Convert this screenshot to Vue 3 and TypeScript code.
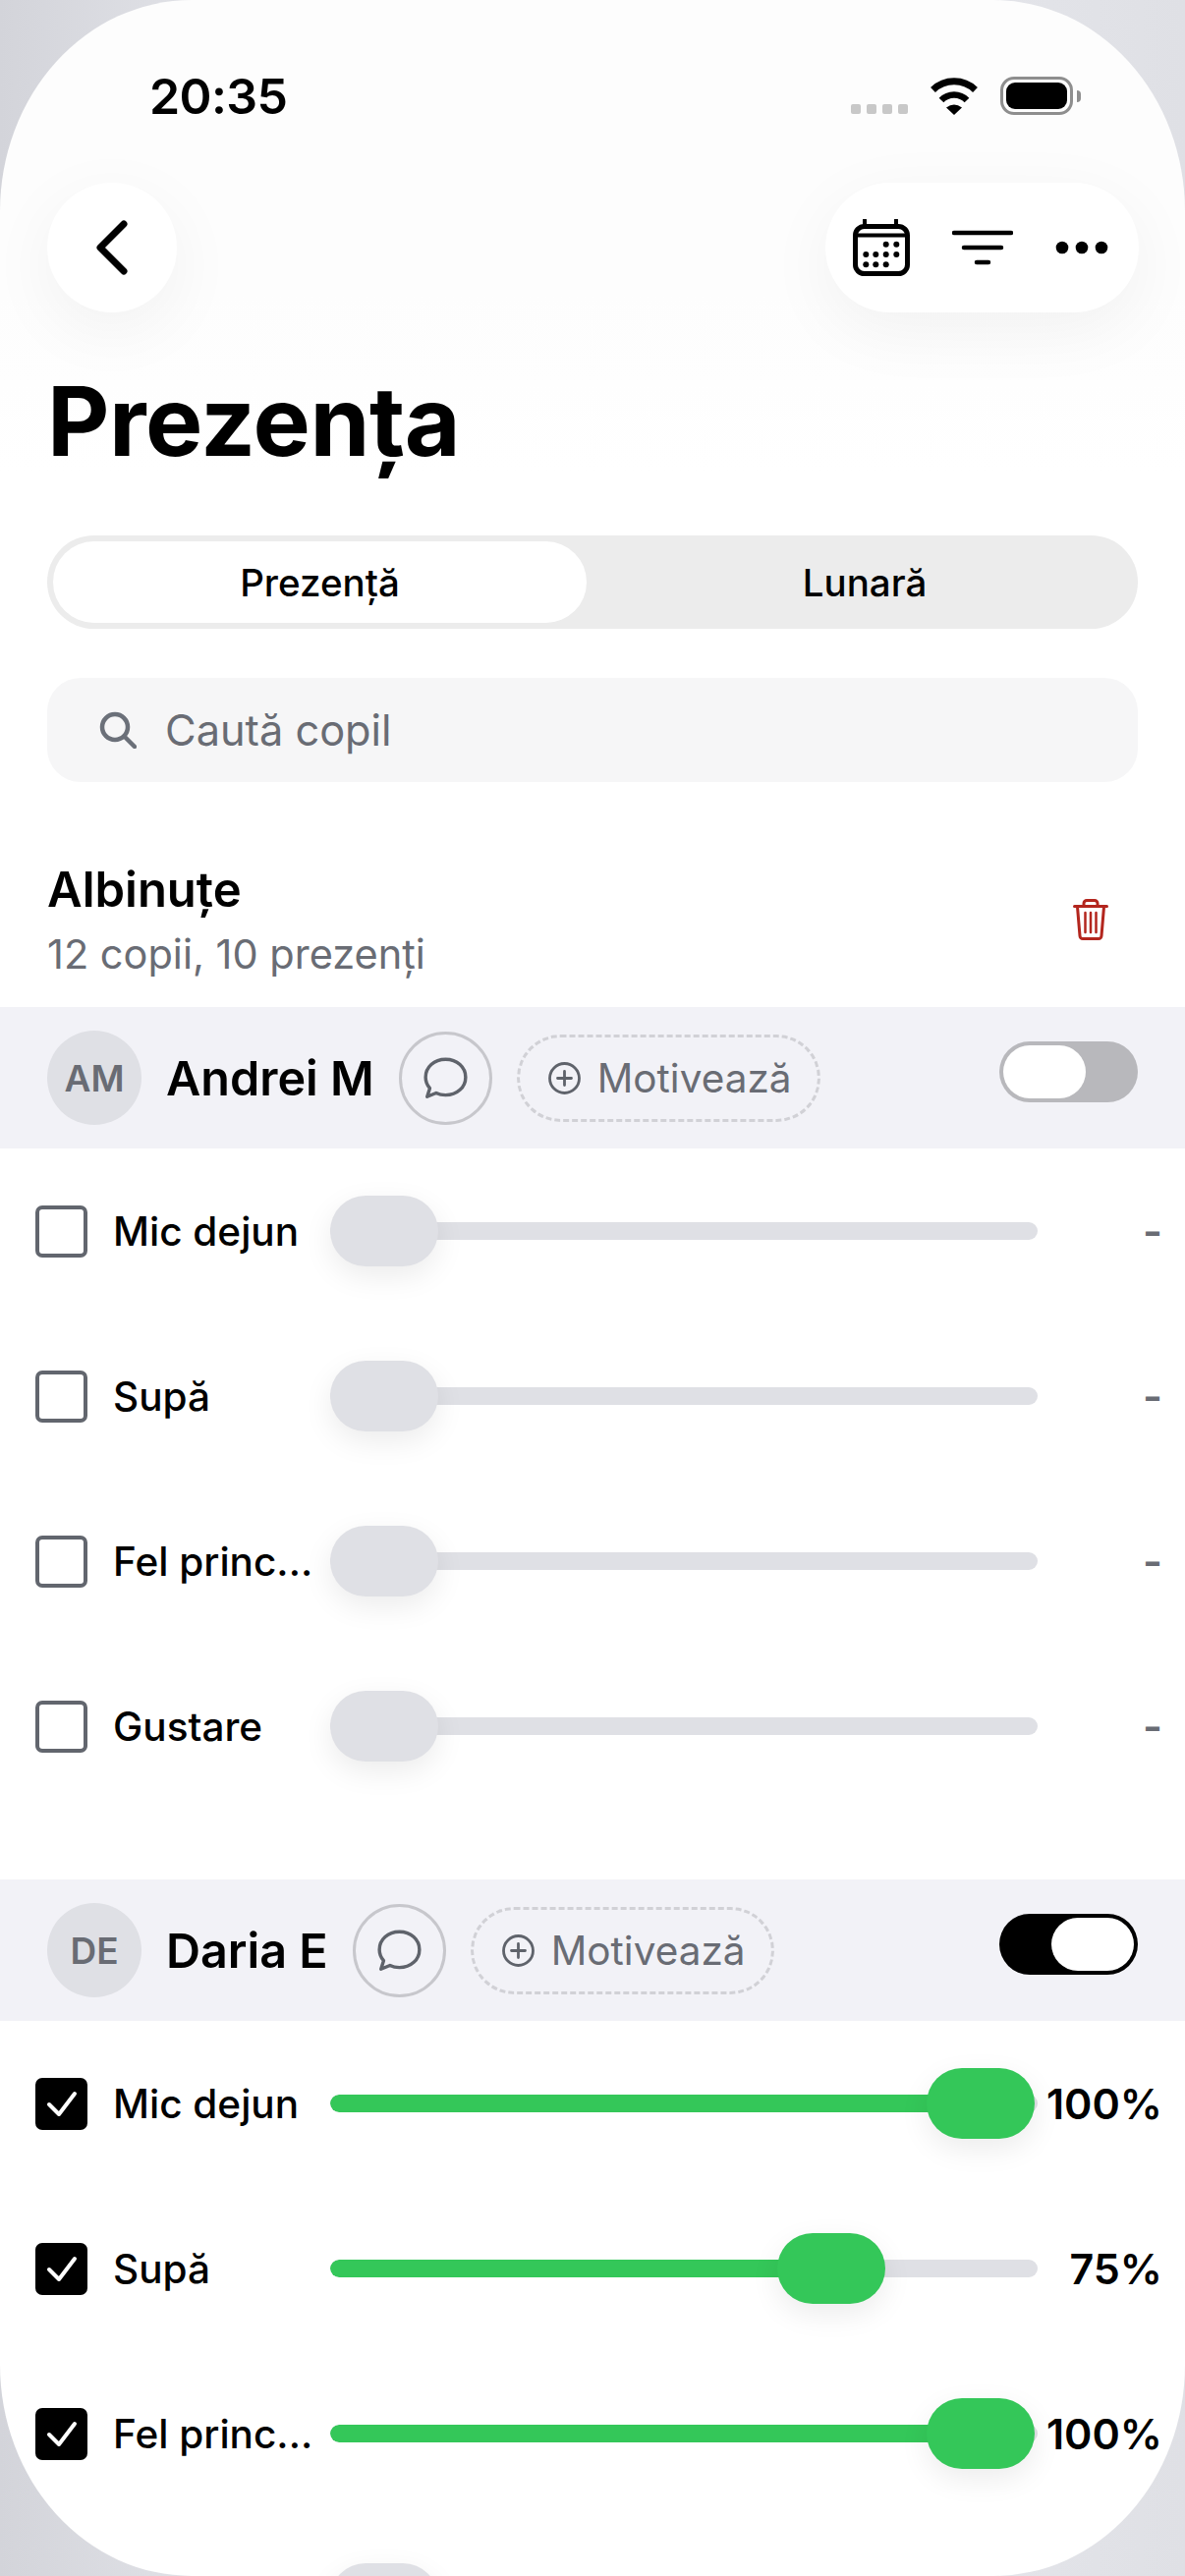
<template>
  <div class="screen">
    <div class="status-bar">
      <span class="time">20:35</span>
      <div class="status-icons">
        <div class="signal">
          <i v-for="n in 4" :key="n"></i>
        </div>
        <svg class="wifi" width="50" height="38" viewBox="0 0 50 38">
          <path d="M3.500 12.500A31 31 0 0 1 46.500 12.500" fill="none" stroke="#000" stroke-width="7" />
          <path d="M12 23A18 18 0 0 1 38 23" fill="none" stroke="#000" stroke-width="6.500" />
          <path d="M25 38L17 30.500Q25 24.500 33 30.500Z" fill="#000" />
        </svg>
        <div class="battery">
          <div class="battery-body"><div class="battery-level"></div></div>
          <div class="battery-nub"></div>
        </div>
      </div>
    </div>

    <div class="nav">
      <button class="round-btn back-btn">
        <svg width="34" height="56" viewBox="0 0 34 56" fill="none">
          <path d="M29 4L5 28L29 52" stroke="#000" stroke-width="7" stroke-linecap="round" stroke-linejoin="round" />
        </svg>
      </button>
      <div class="round-btn actions">
        <svg width="58" height="58" viewBox="0 0 58 58" fill="none" stroke="#000">
          <rect x="2.500" y="7.500" width="53" height="48" rx="9" stroke-width="5" />
          <path d="M12 1V7M44 1V7" stroke-width="4" stroke-linecap="round" />
          <path d="M3 16.500H55" stroke-width="4" />
          <g fill="#000" stroke="none">
            <circle v-for="d in calendarDots" :key="d[0] + '-' + d[1]" :cx="d[0]" :cy="d[1]" r="3" />
          </g>
        </svg>
        <svg width="62" height="36" viewBox="0 0 62 36" fill="none" stroke="#000" stroke-width="4.500" stroke-linecap="round">
          <path d="M2 3H60M12 18H50M25 33H37" />
        </svg>
        <svg width="54" height="14" viewBox="0 0 54 14" fill="#000">
          <circle cx="7" cy="7" r="6.300" />
          <circle cx="27" cy="7" r="6.300" />
          <circle cx="47" cy="7" r="6.300" />
        </svg>
      </div>
    </div>

    <h1 class="title">Prezența</h1>

    <div class="segment">
      <div class="segment-item active">Prezență</div>
      <div class="segment-item">Lunară</div>
    </div>

    <div class="search">
      <svg width="38" height="38" viewBox="0 0 38 38" fill="none" stroke="#6b7079" stroke-width="4.500" stroke-linecap="round">
        <circle cx="16" cy="16" r="13" />
        <path d="M26 26L36 36" />
      </svg>
      <span>Caută copil</span>
    </div>

    <div class="group">
      <div>
        <div class="group-name">Albinuțe</div>
        <div class="group-sub">12 copii, 10 prezenți</div>
      </div>
      <svg width="36" height="42" viewBox="0 0 36 42" fill="none" stroke="#b3261e" stroke-width="3" stroke-linecap="round" stroke-linejoin="round">
        <path d="M1.500 7.500H34.500" />
        <path d="M11 7V4.500A3 3 0 0 1 14 1.500H22A3 3 0 0 1 25 4.500V7" />
        <path d="M4.500 8L7 37.500A3 3 0 0 0 10 40.500H26A3 3 0 0 0 29 37.500L31.500 8" />
        <path d="M12.500 14V34M18 14V34M23.500 14V34" stroke-width="2.500" />
      </svg>
    </div>

    <div v-for="student in students" :key="student.initials" class="student">
      <div class="student-head">
        <div class="avatar">{{ student.initials }}</div>
        <div class="student-name">{{ student.name }}</div>
        <button class="message-btn">
          <svg width="45" height="43" viewBox="0 0 42 40" fill="none" stroke="#5f636b" stroke-width="3.200" stroke-linejoin="round">
            <path d="M21 2C32 2 40 9.500 40 19C40 28.500 32 36 21 36C17.500 36 15 35.500 12 34L3.500 37.500L6 29.500C3.500 26.500 2 23 2 19C2 9.500 10 2 21 2Z" />
          </svg>
        </button>
        <div class="motivate">
          <svg width="33" height="33" viewBox="0 0 33 33" fill="none" stroke="#5f636b" stroke-width="2.800" stroke-linecap="round">
            <circle cx="16.500" cy="16.500" r="15" />
            <path d="M16.500 9.500V23.500M9.500 16.500H23.500" />
          </svg>
          <span>Motivează</span>
        </div>
        <div class="toggle" :class="{ on: student.present }">
          <div class="knob"></div>
        </div>
      </div>

      <div v-for="meal in student.meals" :key="meal.name" class="meal">
        <div class="checkbox" :class="{ checked: meal.value !== null }">
          <svg v-if="meal.value !== null" width="32" height="28" viewBox="0 0 32 28" fill="none" stroke="#fff" stroke-width="4" stroke-linecap="round" stroke-linejoin="round">
            <path d="M3 15L13 25L29 4" />
          </svg>
        </div>
        <div class="meal-name">{{ meal.name }}</div>
        <div class="slider">
          <div class="track">
            <div v-if="meal.value !== null" class="fill" :style="{ width: thumbLeft(meal.value) + 40 + 'px' }"></div>
          </div>
          <div class="thumb" :class="{ active: meal.value !== null }" :style="{ left: thumbLeft(meal.value) + 'px' }"></div>
        </div>
        <div class="meal-value" :class="{ empty: meal.value === null }">
          {{ meal.value === null ? '-' : meal.value + '%' }}
        </div>
      </div>
    </div>
  </div>
</template>

<script setup lang="ts">
interface Meal {
  name: string
  value: number | null
}

interface Student {
  initials: string
  name: string
  present: boolean
  meals: Meal[]
}

const calendarDots: number[][] = [
  [33.7, 25.7], [44.3, 25.7],
  [13.3, 36], [23.3, 36], [33.7, 36], [44.3, 36],
  [13.3, 46.3], [23.3, 46.3], [33.7, 46.3],
]

const students: Student[] = [
  {
    initials: 'AM',
    name: 'Andrei M',
    present: false,
    meals: [
      { name: 'Mic dejun', value: null },
      { name: 'Supă', value: null },
      { name: 'Fel princ...', value: null },
      { name: 'Gustare', value: null },
    ],
  },
  {
    initials: 'DE',
    name: 'Daria E',
    present: true,
    meals: [
      { name: 'Mic dejun', value: 100 },
      { name: 'Supă', value: 75 },
      { name: 'Fel princ...', value: 100 },
      { name: 'Gustare', value: null },
    ],
  },
]

// thumb travels 607px along the track
const thumbLeft = (value: number | null) => ((value ?? 0) / 100) * 607
</script>

<style>
html,
body {
  margin: 0;
  height: 2622px;
  overflow: hidden;
  background: linear-gradient(90deg, #d3d4da 0%, #e3e4e9 20%, #e3e4e9 85%, #dfe0e5 100%);
}
</style>

<style scoped>
.screen {
  width: 1206px;
  height: 2622px;
  overflow: hidden;
  background: linear-gradient(180deg, #fdfdfd 0%, #fdfdfd 300px, #ffffff 480px);
  border-radius: 195px / 215px;
  font-family: Inter, "Noto Sans", sans-serif;
  color: #000;
}

.status-bar {
  height: 186px;
  box-sizing: border-box;
  padding: 68px 106px 0 152px;
  display: flex;
  justify-content: space-between;
}

.time {
  font-size: 50px;
  line-height: 60px;
  font-weight: 600;
  letter-spacing: -0.6px;
}

.status-icons {
  margin-top: 10px;
  display: flex;
  align-items: flex-end;
  gap: 22px;
  height: 39px;
}

.signal {
  display: flex;
  gap: 6px;
  margin-bottom: 1px;
}

.signal i {
  width: 10px;
  height: 10px;
  border-radius: 2px;
  background: #c8c8c8;
}

.battery {
  display: flex;
  align-items: center;
  gap: 4px;
}

.battery-body {
  width: 74px;
  height: 39px;
  box-sizing: border-box;
  border: 3px solid #8e8e8e;
  border-radius: 14px;
  padding: 3px;
}

.battery-level {
  height: 100%;
  background: #000;
  border-radius: 9px;
}

.battery-nub {
  width: 4px;
  height: 12px;
  background: #8e8e8e;
  border-radius: 0 4px 4px 0;
}

.nav {
  padding: 0 47px 0 48px;
  display: flex;
  justify-content: space-between;
}

.round-btn {
  height: 132px;
  background: #fff;
  border: 0;
  border-radius: 66px;
  box-shadow: 0 18px 70px rgba(0, 0, 0, 0.05);
  display: flex;
  align-items: center;
}

.back-btn {
  width: 132px;
  padding: 0;
  justify-content: center;
}

.actions {
  width: 319px;
  box-sizing: border-box;
  padding: 0 31px 0 28px;
  justify-content: space-between;
}

.title {
  margin: 53px 0 0 48px;
  font-size: 98px;
  line-height: 116px;
  font-weight: 700;
  letter-spacing: -0.5px;
}

.segment {
  margin: 58px 48px 0;
  height: 95px;
  box-sizing: border-box;
  padding: 6px;
  background: #ececec;
  border-radius: 48px;
  display: flex;
}

.segment-item {
  flex: 1;
  display: flex;
  align-items: center;
  justify-content: center;
  font-size: 38.500px;
  font-weight: 500;
  border-radius: 42px;
  padding-left: 11px;
}

.segment-item.active {
  flex: 0 0 543px;
  padding-left: 0;
  background: #fff;
}

.search {
  margin: 50px 48px 0;
  height: 106px;
  box-sizing: border-box;
  padding-left: 53px;
  background: #f6f6f7;
  border-radius: 34px;
  display: flex;
  align-items: center;
  gap: 29px;
  font-size: 43.300px;
  color: #696c74;
}

.group {
  padding: 81px 48px 30px;
  height: 229px;
  box-sizing: border-box;
  display: flex;
  justify-content: space-between;
  align-items: center;
}

.group svg {
  margin-right: 30px;
}

.group-name {
  font-size: 49px;
  line-height: 58px;
  font-weight: 600;
}

.group-sub {
  margin-top: 12px;
  font-size: 41.500px;
  line-height: 48px;
  color: #696c74;
}

.student {
  margin-bottom: 72px;
}

.student-head {
  height: 144px;
  box-sizing: border-box;
  padding: 0 48px;
  background: #f2f2f7;
  display: flex;
  align-items: center;
  gap: 26px;
}

.avatar {
  width: 96px;
  height: 96px;
  border-radius: 50%;
  background: #dfe0e5;
  color: #696c74;
  font-size: 37px;
  font-weight: 600;
  display: flex;
  align-items: center;
  justify-content: center;
  flex-shrink: 0;
}

.student-name {
  margin: 0 -1px;
  font-size: 48.500px;
  font-weight: 600;
}

.message-btn {
  width: 95px;
  height: 95px;
  margin-right: -1px;
  padding: 0;
  box-sizing: border-box;
  background: transparent;
  border: 3px solid #c7c7cc;
  border-radius: 50%;
  display: flex;
  align-items: center;
  justify-content: center;
  flex-shrink: 0;
}

.motivate {
  height: 89px;
  box-sizing: border-box;
  padding: 0 26px 0 29px;
  border: 3px dashed #d1d1d6;
  border-radius: 45px;
  display: flex;
  align-items: center;
  gap: 17px;
  font-size: 40.500px;
  color: #696c74;
}

.toggle {
  margin: 0 0 12px auto;
  width: 141px;
  height: 62px;
  box-sizing: border-box;
  padding: 4px;
  border-radius: 31px;
  background: #b8b8bc;
  display: flex;
}

.toggle.on {
  background: #000;
  justify-content: flex-end;
}

.knob {
  width: 84px;
  height: 54px;
  border-radius: 27px;
  background: #fff;
}

.meal {
  height: 168px;
  box-sizing: border-box;
  padding: 0 23px 0 36px;
  display: flex;
  align-items: center;
}

.checkbox {
  width: 53px;
  height: 53px;
  box-sizing: border-box;
  border: 4px solid #62666e;
  border-radius: 7px;
  display: flex;
  align-items: center;
  justify-content: center;
  flex-shrink: 0;
}

.checkbox.checked {
  background: #000;
  border-color: #000;
}

.meal-name {
  width: 206px;
  margin: 0 15px 0 26px;
  font-size: 40.500px;
  font-weight: 500;
  white-space: nowrap;
}

.slider {
  position: relative;
  width: 720px;
  height: 72px;
  display: flex;
  align-items: center;
  flex-shrink: 0;
}

.track {
  width: 100%;
  height: 18px;
  background: #dfe0e5;
  border-radius: 9px;
  overflow: hidden;
}

.fill {
  height: 100%;
  background: #34c759;
  border-radius: 9px;
}

.thumb {
  position: absolute;
  top: 0;
  width: 110px;
  height: 72px;
  border-radius: 36px;
  background: #dfe0e5;
  box-shadow: 0 10px 30px rgba(0, 0, 0, 0.08);
}

.thumb.active {
  background: #34c759;
}

.meal-value {
  flex: 1;
  text-align: right;
  font-size: 43px;
  font-weight: 600;
}

.meal-value.empty {
  color: #696c74;
}
</style>
